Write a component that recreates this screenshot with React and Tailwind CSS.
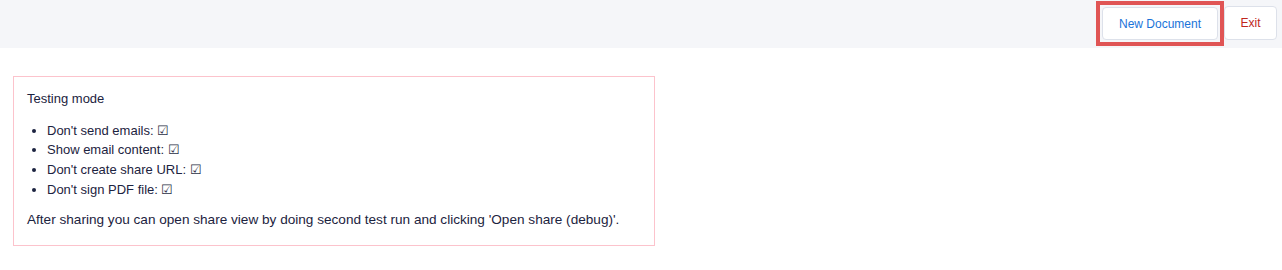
import React from "react";

const items = [
  "Don't send emails:",
  "Show email content:",
  "Don't create share URL:",
  "Don't sign PDF file:",
];

const App = () => {
  return (
    <div className="min-h-screen bg-white text-[#1c2340] text-[12px] font-['Liberation_Sans',Arial,sans-serif]">
      {/* Top bar */}
      <div className="h-[48px] bg-[#f5f6f9] flex items-start justify-end pr-[5px]">
        <div className="mt-[1px] border-[4px] border-[#e05555] p-[2px]">
          <button className="h-[33px] w-[116px] bg-white border border-[#dde1ea] rounded-[4px] text-[#1a73d9]">
            New Document
          </button>
        </div>
        <button className="mt-[6px] h-[34px] w-[53px] bg-white border border-[#dde1ea] rounded-[4px] text-[#c0261c]">
          Exit
        </button>
      </div>

      {/* Testing mode panel */}
      <div className="pt-[28px] pl-[13px]">
        <div className="w-[642px] border border-[#fcc3cc] px-[13px] pt-[12px] pb-[15px] text-[13px] leading-[19.5px]">
          <p>Testing mode</p>
          <ul className="list-disc pl-[20px] mt-[12px] mb-[11px] leading-[19.7px]">
            {items.map((t) => (
              <li key={t}>
                {t} <span className="text-[#2a2f45]">{"\u2611\uFE0E"}</span>
              </li>
            ))}
          </ul>
          <p className="text-[13.6px]">
            After sharing you can open share view by doing second test run and clicking 'Open share (debug)'.
          </p>
        </div>
      </div>
    </div>
  );
};

export default App;
